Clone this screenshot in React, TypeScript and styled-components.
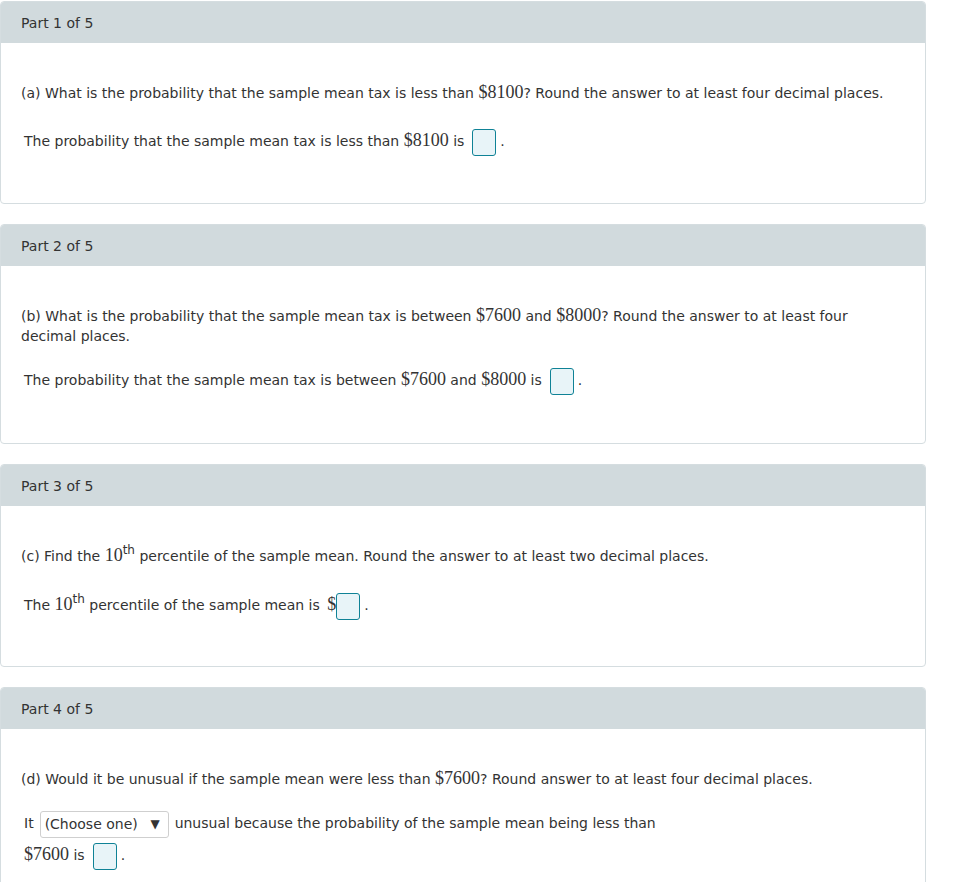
import React from "react";
import styled, { createGlobalStyle } from "styled-components";

const Global = createGlobalStyle`
  html, body { margin: 0; padding: 0; background: #ffffff; }
  body { font-family: "DejaVu Sans", Verdana, sans-serif; color: #333333; }
`;

const Page = styled.div`
  width: 926px;
  display: flex;
  flex-direction: column;
  gap: 20px;
  padding-top: 1px;
`;

const Card = styled.section`
  border: 1px solid #d5dde0;
  border-radius: 4px;
  overflow: hidden;
  background: #fff;
`;

const Header = styled.div`
  height: 41px;
  background: #d1dadd;
  display: flex;
  align-items: center;
  padding-left: 20px;
  font-size: 14px;
  color: #333;
`;

const Body = styled.div<{ $pt: number; $pb: number }>`
  padding: ${(p) => p.$pt}px 36px ${(p) => p.$pb}px 20px;
  font-size: 14px;
  line-height: 20px;
`;

const Question = styled.p`
  margin: 0;
`;

const AnswerRow = styled.div<{ $mt: number }>`
  margin-top: ${(p) => p.$mt}px;
  padding-left: 3px;
  line-height: 32px;
`;

const Money = styled.span<{ $ml?: number }>`
  font-family: "Liberation Serif", "Times New Roman", serif;
  font-size: 18px;
  line-height: 1;
  margin-left: ${(p) => p.$ml ?? 0}px;
`;

const Sup = styled.sup`
  font-size: 12px;
  line-height: 0;
  position: relative;
  top: -1px;
`;

const AnswerBox = styled.span<{ $ml?: number }>`
  display: inline-block;
  width: 22px;
  height: 25px;
  border: 1px solid #0f8296;
  border-radius: 3px;
  background: #e8f4f8;
  vertical-align: middle;
  margin: 0 4px 0 ${(p) => (p.$ml === undefined ? 8 : p.$ml)}px;
`;

const Select = styled.span`
  display: inline-flex;
  align-items: center;
  height: 25px;
  width: 127px;
  box-sizing: content-box;
  border: 1px solid #cfcfcf;
  border-radius: 3px;
  vertical-align: middle;
  margin: 0 6px 0 6px;
  font-size: 14px;
  line-height: 20px;
`;

const SelectText = styled.span`
  padding-left: 4px;
  flex: 1;
`;

const Arrow = styled.span`
  font-size: 12px;
  padding-right: 8px;
`;

export default function App() {
  return (
    <>
      <Global />
      <Page>
        <Card>
          <Header>Part 1 of 5</Header>
          <Body $pt={40} $pb={46}>
            <Question>
              (a) What is the probability that the sample mean tax is less than <Money>$8100</Money>? Round the
              answer to at least four decimal places.
            </Question>
            <AnswerRow $mt={22}>
              The probability that the sample mean tax is less than <Money>$8100</Money> is
              <AnswerBox />.
            </AnswerRow>
          </Body>
        </Card>
        <Card>
          <Header>Part 2 of 5</Header>
          <Body $pt={40} $pb={47}>
            <Question>
              (b) What is the probability that the sample mean tax is between <Money>$7600</Money> and{" "}
              <Money>$8000</Money>? Round the answer to at least four decimal places.
            </Question>
            <AnswerRow $mt={18}>
              The probability that the sample mean tax is between <Money>$7600</Money> and{" "}
              <Money>$8000</Money> is
              <AnswerBox />.
            </AnswerRow>
          </Body>
        </Card>
        <Card>
          <Header>Part 3 of 5</Header>
          <Body $pt={40} $pb={45}>
            <Question>
              (c) Find the <Money>10</Money>
              <Sup>th</Sup> percentile of the sample mean. Round the answer to at least two decimal places.
            </Question>
            <AnswerRow $mt={23}>
              The <Money>10</Money>
              <Sup>th</Sup> percentile of the sample mean is <Money $ml={3}>$</Money>
              <AnswerBox $ml={0} />.
            </AnswerRow>
          </Body>
        </Card>
        <Card>
          <Header>Part 4 of 5</Header>
          <Body $pt={40} $pb={20}>
            <Question>
              (d) Would it be unusual if the sample mean were less than <Money>$7600</Money>? Round answer to
              at least four decimal places.
            </Question>
            <AnswerRow $mt={18}>
              It
              <Select>
                <SelectText>(Choose one)</SelectText>
                <Arrow>▼</Arrow>
              </Select>
              unusual because the probability of the sample mean being less than
              <br />
              <Money>$7600</Money> is
              <AnswerBox />.
            </AnswerRow>
          </Body>
        </Card>
      </Page>
    </>
  );
}
